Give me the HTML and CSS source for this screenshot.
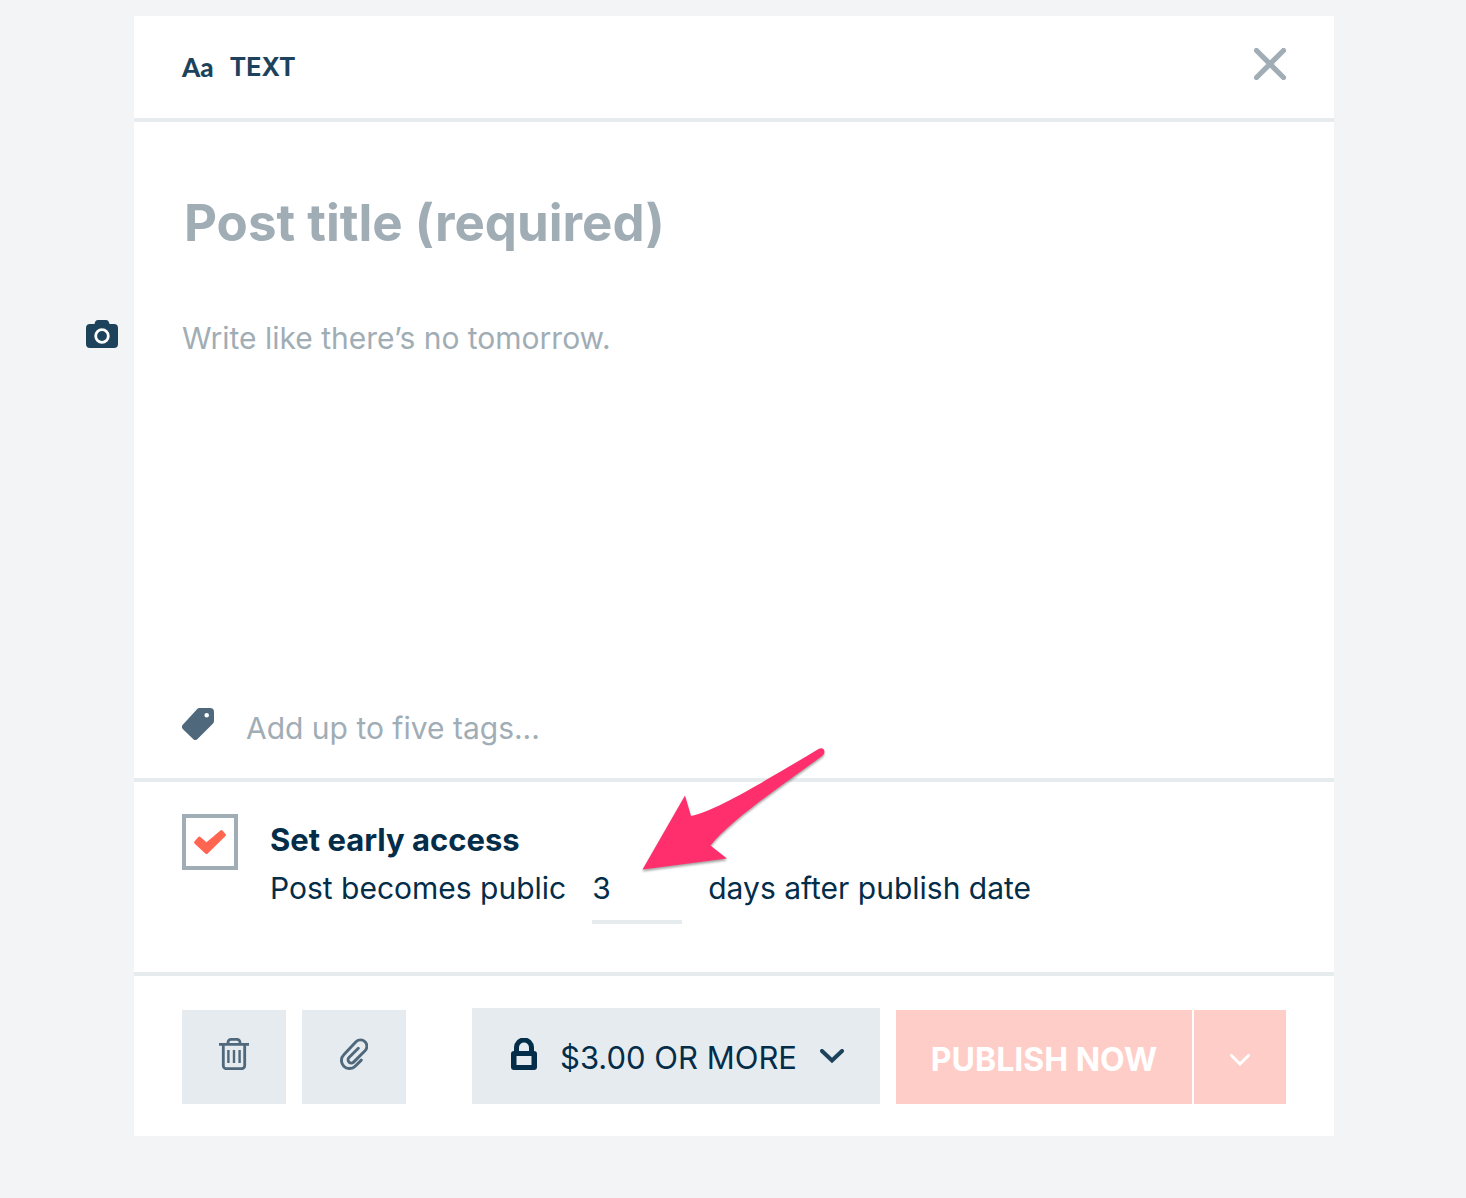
FILE: index.html
```
<!DOCTYPE html>
<html lang="en">
<head>
<meta charset="utf-8">
<meta name="viewport" content="width=device-width, initial-scale=1">
<title>Text post</title>
<link rel="stylesheet" href="styles.css">
</head>
<body>
<main class="page">
  <aside class="gutter">
    <button class="icon-button" type="button" aria-label="Add image">
      <svg width="32" height="28" viewBox="0 0 32 28" aria-hidden="true">
        <path fill="#1d425c" d="M4 4h4.500c.6-2.500 1.500-4 3.500-4h8c2 0 2.900 1.500 3.500 4H28a4 4 0 0 1 4 4v16a4 4 0 0 1-4 4H4a4 4 0 0 1-4-4V8a4 4 0 0 1 4-4z"/>
        <circle cx="16" cy="16" r="6.300" fill="none" stroke="#fff" stroke-width="2.800"/>
      </svg>
    </button>
  </aside>
  <form class="editor">
    <header class="editor-header">
      <h1 class="post-type"><span class="type-mark" aria-hidden="true">Aa</span><span>TEXT</span></h1>
      <button class="icon-button" type="button" aria-label="Close">
        <svg width="32" height="32" viewBox="0 0 32 32" aria-hidden="true">
          <path d="M2.500 2.500l27 27M29.500 2.500l-27 27" stroke="#a1adb5" stroke-width="5.200" stroke-linecap="round"/>
        </svg>
      </button>
    </header>

    <section class="editor-body">
      <input class="field title-field" type="text" aria-label="Post title" placeholder="Post title (required)">
      <textarea class="field body-field" aria-label="Post body" placeholder="Write like there’s no tomorrow."></textarea>
      <label class="tags">
        <svg width="32" height="32" viewBox="0 0 32 32" aria-hidden="true">
          <path fill="#4f687c" fill-rule="evenodd" d="M17.500 0H28a4 4 0 0 1 4 4v9c0 1-.4 2-1.200 2.800L15.500 31a3.200 3.200 0 0 1-4.400 0L1 21.200a3.200 3.200 0 0 1 0-4.600L15 1.200C15.700.4 16.500 0 17.500 0zM24.700 5a2.300 2.300 0 1 0 0 4.600 2.300 2.300 0 0 0 0-4.600z"/>
        </svg>
        <input class="field tags-field" type="text" aria-label="Tags" placeholder="Add up to five tags...">
      </label>
    </section>

    <section class="early-access">
      <span class="check">
        <input class="check-input" id="early" type="checkbox" checked>
        <svg class="check-mark" width="32" height="26" viewBox="0 0 32 26" aria-hidden="true">
          <path d="M2 13.500L5.500 9.500L12.500 15.700L27.300 3L30 6L12.500 23.200Z" fill="#ff6550" stroke="#ff6550" stroke-width="3.600" stroke-linejoin="round"/>
        </svg>
      </span>
      <div class="access-text">
        <label class="access-title" for="early">Set early access</label>
        <div class="access-line">
          <label for="days">Post becomes public</label>
          <input class="days" id="days" type="text" inputmode="numeric" value="3">
          <span>days after publish date</span>
        </div>
      </div>
      <svg class="pointer" width="200" height="140" viewBox="640 740 200 140" aria-hidden="true">
        <path fill="#ff2f6d" d="M642.500 869.500L685 795.500L691 816C716 811 768 779 819 748.700Q824 747 824.500 752Q824.500 754 822 756C780 787 732 819 710.500 845.500L727 858.500Z"/>
      </svg>
    </section>

    <footer class="actions">
      <button class="tool" type="button" aria-label="Delete">
        <svg width="30" height="32" viewBox="0 0 30 32" fill="none" stroke="#4f687c" aria-hidden="true">
          <path stroke-width="2.800" d="M0 6.400h30M4.300 6.400v21.300a3 3 0 0 0 3 3h15.400a3 3 0 0 0 3-3V6.400M9 6V4.400a3 3 0 0 1 3-3h6a3 3 0 0 1 3 3V6"/>
          <path stroke-width="2.400" d="M9.400 12v13M15 12v13M20.600 12v13"/>
        </svg>
      </button>
      <button class="tool" type="button" aria-label="Attach file">
        <svg width="28" height="32" viewBox="0 0 28 32" fill="none" stroke="#4f687c" stroke-width="2.900" stroke-linecap="round" aria-hidden="true">
          <path d="M21.300 22.100L15.200 28.200A8 8 0 0 1 3.800 16.800L16 3.700A6.300 6.300 0 0 1 25 12.700L13.600 24.100A3.200 3.200 0 0 1 9 19.500L18.300 10.200"/>
        </svg>
      </button>
      <label class="price">
        <svg class="lock" width="26" height="32" viewBox="0 0 26 32" aria-hidden="true">
          <path d="M5.500 14V9.500a7.500 7.500 0 0 1 15 0V14" fill="none" stroke="#042d49" stroke-width="5"/>
          <path fill="#042d49" fill-rule="evenodd" d="M3 13h20a3 3 0 0 1 3 3v13a3 3 0 0 1-3 3H3a3 3 0 0 1-3-3V16a3 3 0 0 1 3-3zM5.500 18v9h15v-9z"/>
        </svg>
        <select class="price-select" aria-label="Who can see this post">
          <option>$3.00 OR MORE</option>
        </select>
        <svg width="24" height="14" viewBox="0 0 24 14" aria-hidden="true">
          <path d="M2 2l10 9.500L22 2" fill="none" stroke="#1d425c" stroke-width="4" stroke-linecap="round"/>
        </svg>
      </label>
      <div class="publish">
        <button class="publish-button publish-main" type="button">PUBLISH NOW</button>
        <button class="publish-button publish-more" type="button" aria-label="More publishing options">
          <svg width="20" height="12" viewBox="0 0 20 12" aria-hidden="true">
            <path d="M1.500 1.500l8.500 8.500 8.500-8.500" fill="none" stroke="#fff" stroke-width="3" stroke-linecap="round"/>
          </svg>
        </button>
      </div>
    </footer>
  </form>
</main>
</body>
</html>
```
FILE: styles.css
```
* { box-sizing: border-box; }

body {
  margin: 0;
  background: #f2f4f6;
  color: #042d49;
  font: 400 30px/48px Inter, "Liberation Sans", sans-serif;
}

button, input, select, textarea {
  margin: 0;
  padding: 0;
  border: 0;
  border-radius: 0;
  background: none;
  color: inherit;
  font: inherit;
}

button { cursor: pointer; }
svg { display: block; flex: none; }

.page {
  display: flex;
  padding: 16px 132px 62px 86px;
}

.gutter {
  flex: none;
  width: 48px;
  padding-top: 304px;
}

.icon-button { display: block; }

.editor {
  flex: 1;
  min-width: 0;
  background: #fff;
}

.editor-header {
  display: flex;
  align-items: center;
  justify-content: space-between;
  height: 106px;
  padding: 0 48px 6px;
  border-bottom: 4px solid #e6ebee;
}

.post-type {
  display: flex;
  align-items: center;
  gap: 16px;
  margin: 0;
  padding-top: 6px;
  color: #1d425c;
  font-size: 25px;
  font-weight: 700;
}

.type-mark {
  font-family: Lato, sans-serif;
  font-size: 26px;
  font-weight: 900;
}

.editor-body {
  display: flex;
  flex-direction: column;
  padding: 68px 48px 30px;
  border-bottom: 4px solid #e6ebee;
}

.field {
  display: block;
  width: 100%;
  outline: 0;
}

.field::placeholder { color: #a1adb5; opacity: 1; }

.title-field {
  height: 64px;
  padding-left: 2px;
  font-size: 51px;
  font-weight: 700;
}

.body-field {
  height: 352px;
  margin: 60px 0 34px;
  resize: none;
}

.tags {
  display: flex;
  align-items: center;
  gap: 32px;
}

.tags-field {
  height: 48px;
  padding-top: 8px;
  line-height: 40px;
}

.early-access {
  position: relative;
  display: flex;
  gap: 32px;
  padding: 32px 48px 48px;
  border-bottom: 4px solid #e6ebee;
}

.check {
  display: grid;
  flex: none;
  place-items: center;
  width: 56px;
  height: 56px;
}

.check-input, .check-mark { grid-area: 1 / 1; }

.check-input {
  width: 100%;
  height: 100%;
  border: 4px solid #a1adb5;
  appearance: none;
}

.check-mark { pointer-events: none; visibility: hidden; }
.check-input:checked + .check-mark { visibility: visible; }

.access-text { padding-top: 2px; }

.access-title {
  display: block;
  font-size: 31px;
  font-weight: 700;
}

.access-line {
  display: flex;
  align-items: flex-start;
  gap: 26px;
}

.days {
  width: 90px;
  height: 60px;
  padding-bottom: 8px;
  border-bottom: 4px solid #e6ebee;
}

.pointer {
  position: absolute;
  top: -42px;
  left: 506px;
  filter: drop-shadow(0 2px 1px rgba(0, 0, 0, .35));
  pointer-events: none;
}

.actions {
  display: flex;
  align-items: flex-end;
  gap: 16px;
  padding: 32px 48px;
}

.tool {
  display: grid;
  place-items: center;
  width: 104px;
  height: 94px;
  padding-bottom: 6px;
  background: #e6ebef;
}

.price {
  display: flex;
  align-items: center;
  justify-content: space-between;
  width: 408px;
  height: 96px;
  margin-left: auto;
  padding: 0 36px 0 39px;
  background: #e6ebef;
  font-size: 31px;
}

.lock { margin-bottom: 4px; }

.price-select {
  padding-top: 4px;
  appearance: none;
}

.publish { display: flex; gap: 2px; }

.publish-button {
  height: 94px;
  padding-top: 6px;
  background: #ffcdc7;
  color: #fff;
  font-size: 32px;
  font-weight: 700;
}

.publish-main { width: 296px; }

.publish-more {
  display: grid;
  place-items: center;
  width: 92px;
}
```
